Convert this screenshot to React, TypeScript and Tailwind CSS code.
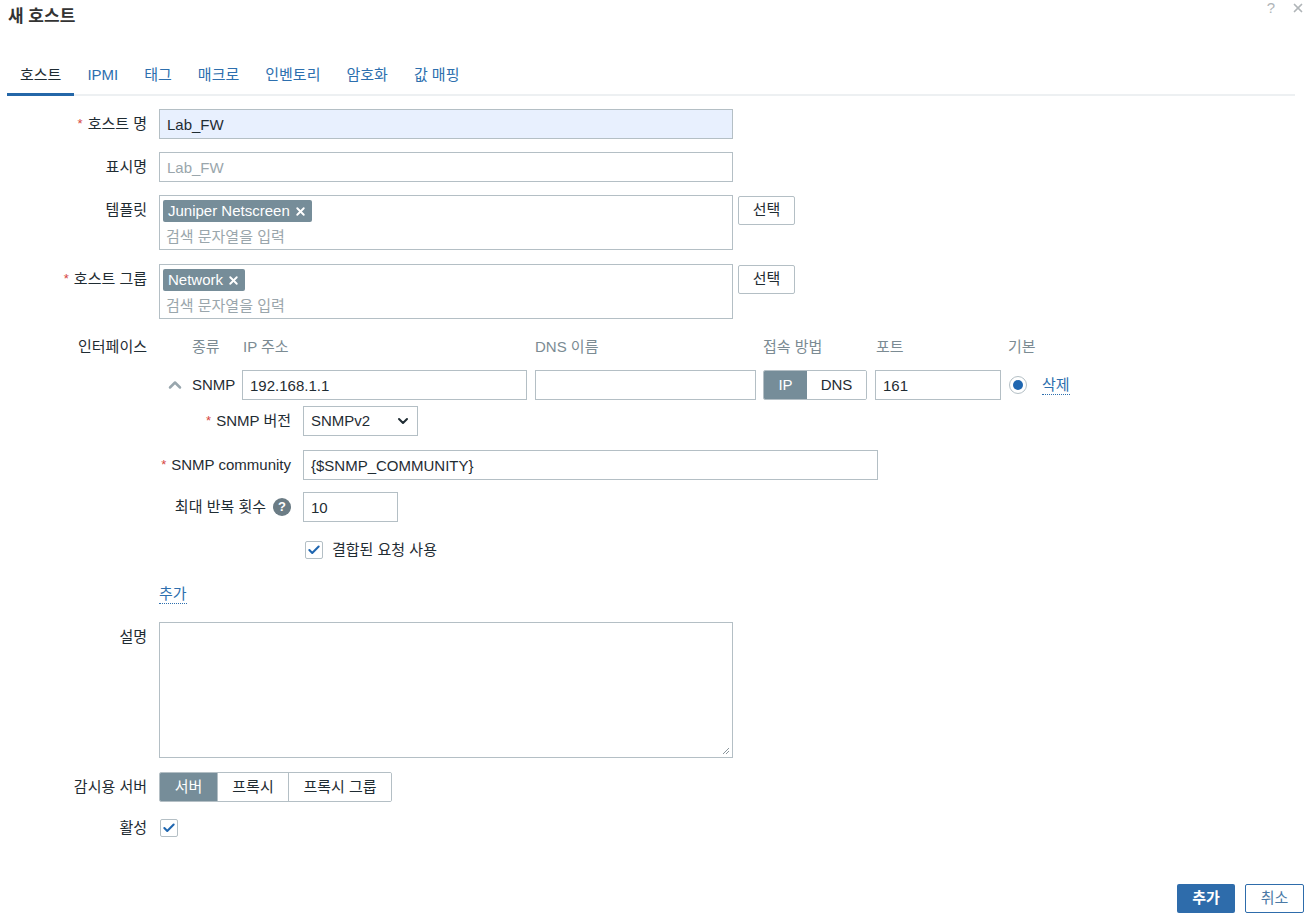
import { ChevronUp, ChevronDown, Check, X } from 'lucide-react';
import type { ReactNode } from 'react';

const border = 'border border-[#b4bfc5]';
const inputCls = `h-[30px] ${border} px-[7px] text-[15px] text-[#1f2c33] outline-none`;

function Req() {
  return <span className="mr-[5px] text-[13px] text-[#d64541]">*</span>;
}

function Row({
  label,
  required,
  children,
  className = '',
}: {
  label: ReactNode;
  required?: boolean;
  children: ReactNode;
  className?: string;
}) {
  return (
    <div className={`flex items-start ${className}`}>
      <div className="flex h-[30px] w-[147px] shrink-0 items-center justify-end text-[15px] text-[#1f2c33]">
        {required && <Req />}
        {label}
      </div>
      <div className="ml-[12px]">{children}</div>
    </div>
  );
}

function Tag({ text }: { text: string }) {
  return (
    <span className="inline-flex h-[22px] items-center rounded-[2px] bg-[#768d99] px-[5px] text-[15px] text-white">
      {text}
      <X className="ml-[4px] h-[13px] w-[13px]" strokeWidth={3.5} />
    </span>
  );
}

function MultiSelect({ tag }: { tag: string }) {
  return (
    <div className="flex items-start">
      <div className={`h-[55px] w-[574px] ${border} bg-white px-[3px] pt-[3px]`}>
        <Tag text={tag} />
        <div className="ml-[3px] mt-[4px] text-[15px] leading-[20px] text-[#9aa6ac]">검색 문자열을 입력</div>
      </div>
      <button className={`ml-[5px] mt-px h-[29px] w-[57px] rounded-[2px] ${border} bg-white text-[15px] text-[#1f2c33]`}>
        선택
      </button>
    </div>
  );
}

function SubRow({ label, required, children, className = '' }: { label: ReactNode; required?: boolean; children: ReactNode; className?: string }) {
  return (
    <div className={`flex items-center ${className}`}>
      <div className="flex w-[132px] items-center justify-end text-[15px] text-[#1f2c33]">
        {required && <Req />}
        {label}
      </div>
      <div className="ml-[12px]">{children}</div>
    </div>
  );
}

export default function App() {
  const tabs = ['호스트', 'IPMI', '태그', '매크로', '인벤토리', '암호화', '값 매핑'];
  return (
    <div className="flex h-[919px] w-full flex-col bg-white font-[family-name:Liberation_Sans,Noto_Sans_CJK_KR,sans-serif] text-[#1f2c33]">
      {/* header */}
      <div className="flex h-[34px] items-center justify-between pl-[8px] pr-[4px]">
        <div className="text-[17px] font-bold text-[#333]">새 호스트</div>
        <div className="-mt-[18px] flex items-center gap-[16px] text-[15px] text-[#b0b5b8]">
          <span>?</span>
          <X className="h-[14px] w-[14px]" strokeWidth={3} />
        </div>
      </div>

      {/* tabs */}
      <div className="ml-[7px] mr-[14px] mt-[24px] flex border-b-2 border-[#edf0f2]">
        {tabs.map((t, i) => (
          <div
            key={t}
            className={`-mb-[2px] flex h-[38px] items-center border-b-[3px] px-[13px] text-[15px] ${
              i === 0 ? 'border-[#2467a8] text-[#1f2c33]' : 'border-transparent text-[#2d6fae]'
            }`}
          >
            {t}
          </div>
        ))}
      </div>

      {/* form */}
      <div className="mt-[13px] flex flex-col">
        <Row label="호스트 명" required>
          <input className={`${inputCls} w-[574px] bg-[#e8f0fe]`} defaultValue="Lab_FW" />
        </Row>
        <Row label="표시명" className="mt-[13px]">
          <input className={`${inputCls} w-[574px] bg-white placeholder:text-[#9aa6ac]`} placeholder="Lab_FW" />
        </Row>
        <Row label="템플릿" className="mt-[13px]">
          <MultiSelect tag="Juniper Netscreen" />
        </Row>
        <Row label="호스트 그룹" required className="mt-[14px]">
          <MultiSelect tag="Network" />
        </Row>

        {/* interfaces */}
        <Row label="인터페이스" className="mt-[13px]">
          <div className="flex flex-col">
            <div className="flex h-[30px] items-center text-[15px] text-[#7b8b93]">
              <div className="w-[33px]" />
              <div className="w-[50px]">종류</div>
              <div className="w-[293px] pl-[1px]">IP 주소</div>
              <div className="w-[228px]">DNS 이름</div>
              <div className="w-[112px]">접속 방법</div>
              <div className="w-[133px] pl-[1px]">포트</div>
              <div>기본</div>
            </div>
            <div className="mt-[8px] flex h-[30px] items-center">
              <div className="flex w-[33px] justify-center pr-[2px]">
                <ChevronUp className="h-[20px] w-[20px] text-[#98a6ad]" strokeWidth={3} />
              </div>
              <div className="w-[50px] text-[15px]">SNMP</div>
              <input className={`${inputCls} w-[285px] bg-white`} defaultValue="192.168.1.1" />
              <input className={`${inputCls} ml-[8px] w-[221px] bg-white`} />
              <div className={`ml-[7px] flex h-[30px] w-[104px] overflow-hidden rounded-[2px] ${border} text-[15px]`}>
                <div className="flex w-[43px] items-center justify-center bg-[#768d99] text-white">IP</div>
                <div className="flex flex-1 items-center justify-center bg-white">DNS</div>
              </div>
              <input className={`${inputCls} ml-[8px] w-[126px] bg-white`} defaultValue="161" />
              <div className="ml-[8px] flex h-[18px] w-[18px] items-center justify-center rounded-full border border-[#b4bfc5] bg-white">
                <div className="h-[10px] w-[10px] rounded-full bg-[#1f66b0]" />
              </div>
              <span className="ml-[15px] border-b border-dotted border-[#2d6fae] text-[15px] leading-[18px] text-[#2d6fae]">
                삭제
              </span>
            </div>

            <SubRow label="SNMP 버전" required className="mt-[6px]">
              <div className={`flex h-[30px] w-[115px] items-center justify-between ${border} bg-white pl-[7px] pr-[6px] text-[15px]`}>
                SNMPv2
                <ChevronDown className="h-[16px] w-[16px] text-[#1f2c33]" strokeWidth={3} />
              </div>
            </SubRow>
            <SubRow label="SNMP community" required className="mt-[14px]">
              <input className={`${inputCls} w-[575px] bg-white`} defaultValue="{$SNMP_COMMUNITY}" />
            </SubRow>
            <SubRow
              label={
                <>
                  최대 반복 횟수
                  <span className="ml-[7px] flex h-[18px] w-[18px] items-center justify-center rounded-full bg-[#6b7c85] text-[13px] font-bold text-white">
                    ?
                  </span>
                </>
              }
              className="mt-[12px]"
            >
              <input className={`${inputCls} w-[95px] bg-white`} defaultValue="10" />
            </SubRow>
            <div className="ml-[146px] mt-[18px] flex h-[20px] items-center">
              <div className="flex h-[18px] w-[18px] items-center justify-center rounded-[2px] border border-[#b4bfc5] bg-white">
                <Check className="h-[14px] w-[14px] text-[#1f66b0]" strokeWidth={3.5} />
              </div>
              <span className="ml-[9px] text-[15px]">결합된 요청 사용</span>
            </div>
            <div className="mt-[26px]" />
          </div>
        </Row>
        <div className="ml-[159px] mt-[-2px] flex h-[20px] items-center">
          <span className="border-b border-dotted border-[#2d6fae] text-[15px] leading-[18px] text-[#2d6fae]">추가</span>
        </div>

        <Row label="설명" className="mt-[18px]">
          <div className={`relative h-[136px] w-[574px] ${border} bg-white`}>
            <svg className="absolute bottom-[2px] right-[2px]" width="8" height="8" viewBox="0 0 8 8">
              <path d="M7 1L1 7M7 4L4 7" stroke="#8a969c" strokeWidth="1" />
            </svg>
          </div>
        </Row>

        <Row label="감시용 서버" className="mt-[14px]">
          <div className={`flex h-[30px] overflow-hidden rounded-[2px] ${border} text-[15px]`}>
            <div className="flex w-[57px] items-center justify-center bg-[#768d99] text-white">서버</div>
            <div className="flex w-[71px] items-center justify-center border-l border-[#b4bfc5] bg-white">프록시</div>
            <div className="flex w-[103px] items-center justify-center border-l border-[#b4bfc5] bg-white">프록시 그룹</div>
          </div>
        </Row>

        <div className="mt-[15px] flex h-[22px] items-center">
          <div className="w-[147px] text-right text-[15px]">활성</div>
          <div className="ml-[13px] flex h-[18px] w-[18px] items-center justify-center rounded-[2px] border border-[#b4bfc5] bg-white">
            <Check className="h-[14px] w-[14px] text-[#1f66b0]" strokeWidth={3.5} />
          </div>
        </div>
      </div>

      {/* footer */}
      <div className="mt-auto flex justify-end gap-[10px] pb-[6px] pr-[5px]">
        <button className="h-[29px] w-[58px] rounded-[2px] bg-[#2e6cab] text-[15px] font-bold text-white">추가</button>
        <button className="h-[29px] w-[59px] rounded-[2px] border border-[#2e6cab] bg-white text-[15px] text-[#4b7aa6]">취소</button>
      </div>
    </div>
  );
}
